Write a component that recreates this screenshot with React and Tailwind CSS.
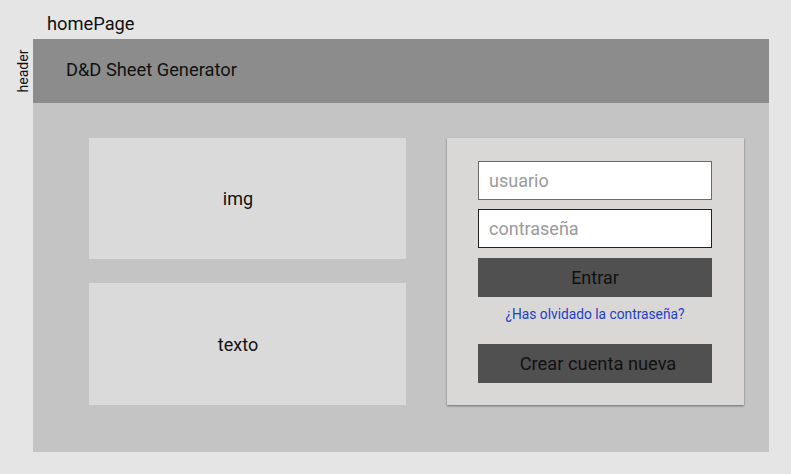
import React from "react";

export default function App() {
  return (
    <div
      className="w-[791px] h-[474px] bg-[#e5e5e5] text-[#111]"
      style={{ fontFamily: "Roboto, 'Liberation Sans', sans-serif" }}
    >
      <div className="h-[39px] pl-[47px] pt-[13px] text-[18.3px] leading-[21px] text-[#111]">homePage</div>
      <div className="flex">
        <div className="w-[33px] h-[64px] flex items-center justify-center">
          <span className="-rotate-90 text-[14px] leading-[14px] text-[#111] whitespace-nowrap translate-x-[7px] translate-y-[0px]">header</span>
        </div>
        <div className="w-[736px]">
          <div className="h-[64px] bg-[#8c8c8c] flex items-center pl-[33px] pb-[3px] text-[18.3px] text-[#111]">
            D&amp;D Sheet Generator
          </div>
          <div className="h-[349px] bg-[#c4c4c4] pl-[56px] pt-[35px] flex gap-[41px] items-start">
            <div className="flex flex-col gap-[24px] w-[317px]">
              <div className="h-[121px] bg-[#dadada] flex items-center justify-center pr-[19px] text-[18px]">img</div>
              <div className="h-[122px] bg-[#dadada] flex items-center justify-center pr-[19px] text-[18px]">texto</div>
            </div>
            <div className="w-[297px] h-[267px] bg-[#d9d8d7] shadow-[0_1px_2px_rgba(0,0,0,0.45)] pl-[31px] pt-[23px] flex flex-col">
              <div className="w-[234px] h-[39px] bg-white border border-[#6a6a6a] flex items-center pl-[10px] text-[18px] text-[#9a9a9a]">usuario</div>
              <div className="w-[234px] h-[39px] mt-[9px] bg-white border border-[#222] flex items-center pl-[10px] text-[18px] text-[#9a9a9a]">contraseña</div>
              <div className="w-[234px] h-[39px] mt-[10px] bg-[#505050] flex items-center justify-center text-[18px] text-[#111]">Entrar</div>
              <div className="w-[234px] h-[34px] flex items-center justify-center text-[13.75px] text-[#1f3fc8]">¿Has olvidado la contraseña?</div>
              <div className="w-[234px] h-[39px] mt-[13px] bg-[#505050] flex items-center justify-center text-[18.3px] text-[#111] pl-[6px]">Crear cuenta nueva</div>
            </div>
          </div>
        </div>
      </div>
    </div>
  );
}
